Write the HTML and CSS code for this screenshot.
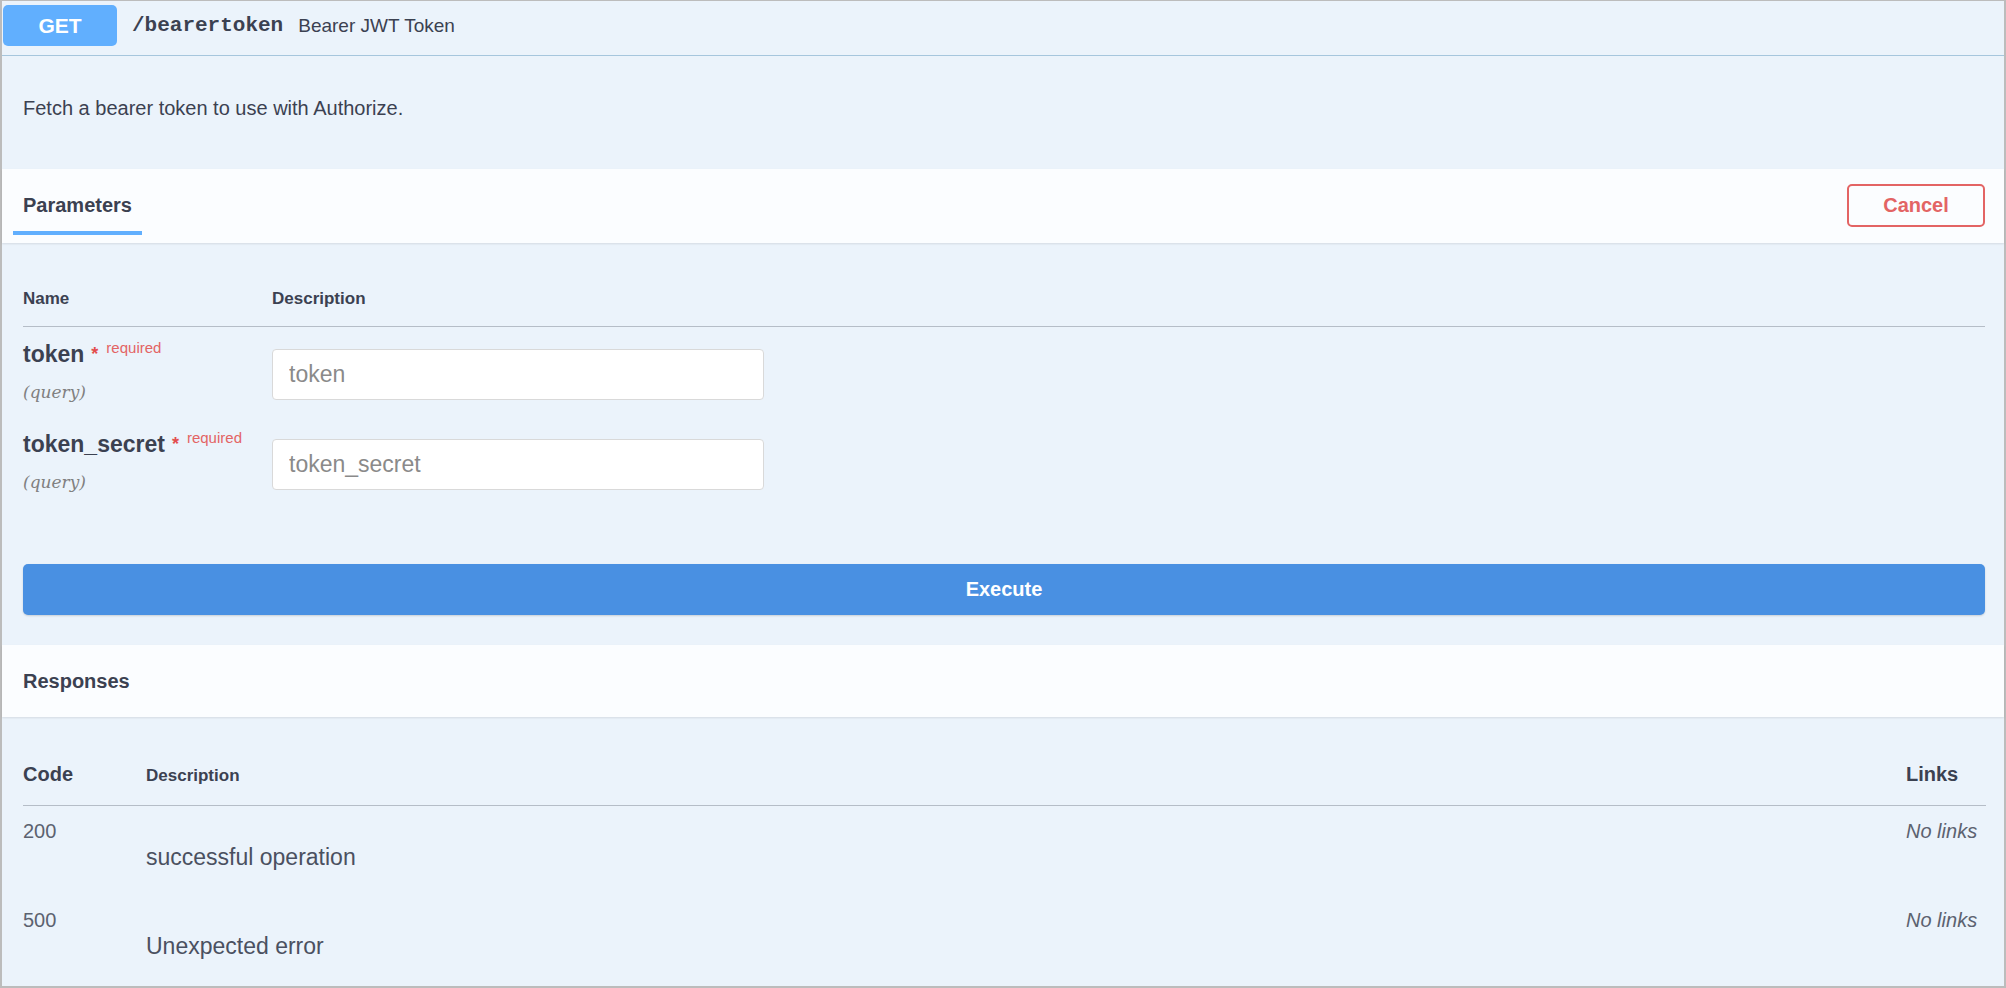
FILE: index.html
```html
<!DOCTYPE html>
<html lang="en">
<head>
  <meta charset="UTF-8">
  <meta name="viewport" content="width=device-width, initial-scale=1.0">
  <title>GET /bearertoken</title>
  <link rel="stylesheet" href="styles.css">
</head>
<body>
  <div class="opblock">
    <!-- Summary -->
    <div class="summary">
      <span class="method">GET</span>
      <span class="path">/bearertoken</span>
      <span class="summary-text">Bearer JWT Token</span>
    </div>

    <div class="description">Fetch a bearer token to use with Authorize.</div>

    <!-- Parameters -->
    <div class="section-header">
      <div class="tab">Parameters</div>
      <button class="btn-cancel">Cancel</button>
    </div>

    <div class="params">
      <div class="params-head">
        <div class="col-name">Name</div>
        <div class="col-desc">Description</div>
      </div>

      <div class="param-row">
        <div class="col-name">
          <div class="param-name">token<span class="star">*</span><span class="req">required</span></div>
          <div class="param-in">(query)</div>
        </div>
        <div class="col-desc">
          <input class="param-input" type="text" placeholder="token">
        </div>
      </div>

      <div class="param-row">
        <div class="col-name">
          <div class="param-name">token_secret<span class="star">*</span><span class="req">required</span></div>
          <div class="param-in">(query)</div>
        </div>
        <div class="col-desc">
          <input class="param-input" type="text" placeholder="token_secret">
        </div>
      </div>
    </div>

    <div class="execute-wrap">
      <button class="btn-execute">Execute</button>
    </div>

    <!-- Responses -->
    <div class="section-header responses-header">
      <div class="section-title">Responses</div>
    </div>

    <div class="responses">
      <div class="resp-head">
        <div class="col-code">Code</div>
        <div class="col-rdesc">Description</div>
        <div class="col-links">Links</div>
      </div>

      <div class="resp-row">
        <div class="col-code status">200</div>
        <div class="col-rdesc resp-text">successful operation</div>
        <div class="col-links no-links">No links</div>
      </div>

      <div class="resp-row">
        <div class="col-code status">500</div>
        <div class="col-rdesc resp-text">Unexpected error</div>
        <div class="col-links no-links">No links</div>
      </div>
    </div>
  </div>
</body>
</html>
```

FILE: styles.css
```css
/* Stylesheet */
body {
  margin: 0;
  font-family: "Liberation Sans", Arial, sans-serif;
  color: #3b4151;
}

.opblock {
  box-sizing: border-box;
  height: 988px;
  background-color: #ebf3fb;
  border: 2px solid #bcbcbc;
  border-top-width: 1px;
}

/* Summary row */
.summary {
  box-sizing: border-box;
  height: 55px;
  display: flex;
  align-items: center;
  padding: 4px 0 9px 1px;
  border-bottom: 1px solid #a6c6dd;
}

.method {
  width: 114px;
  height: 41px;
  display: flex;
  align-items: center;
  justify-content: center;
  background-color: #61affe;
  border-radius: 5px;
  color: #fff;
  font-weight: bold;
  font-size: 21px;
}

.path {
  margin-left: 15px;
  font-family: "Liberation Mono", monospace;
  font-weight: bold;
  font-size: 21px;
}

.summary-text {
  margin-left: 15px;
  font-size: 19px;
}

.description {
  padding: 40px 21px 49px;
  font-size: 20px;
  line-height: 24px;
}

/* Section headers */
.section-header {
  box-sizing: border-box;
  height: 74px;
  display: flex;
  justify-content: space-between;
  align-items: flex-start;
  background-color: #fbfdff;
  box-shadow: 0 1px 2px rgba(0, 0, 0, 0.1);
}

.tab {
  margin: 24px 0 0 11px;
  padding: 0 10px 14px;
  border-bottom: 4px solid #61affe;
  font-size: 20px;
  line-height: 24px;
  font-weight: bold;
}

.btn-cancel {
  margin: 15px 19px 0 0;
  width: 138px;
  height: 43px;
  background: transparent;
  border: 2px solid #e36464;
  border-radius: 5px;
  color: #e36464;
  font-family: inherit;
  font-weight: bold;
  font-size: 20px;
  cursor: pointer;
}

/* Parameters table */
.params {
  padding: 0 19px 0 21px;
}

.params-head {
  display: flex;
  padding: 46px 0 17px;
  border-bottom: 1px solid #b5bdc7;
  font-size: 17px;
  line-height: 20px;
  font-weight: bold;
}

.col-name {
  width: 249px;
  flex-shrink: 0;
}

.col-desc {
  flex: 1;
}

.param-row {
  display: flex;
  padding: 14px 0 15px;
}

.param-name {
  font-size: 23px;
  line-height: 26px;
  font-weight: bold;
}

.star {
  margin-left: 7px;
  color: #e34d4d;
  font-size: 18px;
  vertical-align: top;
}

.req {
  margin-left: 8px;
  color: #e36464;
  font-size: 15px;
  font-weight: normal;
  vertical-align: top;
  position: relative;
  top: -6px;
}

.param-in {
  margin-top: 15px;
  font-family: "DejaVu Serif", serif;
  font-style: italic;
  font-size: 17px;
  line-height: 20px;
  color: #808080;
}

.param-input {
  box-sizing: border-box;
  width: 492px;
  height: 51px;
  margin-top: 8px;
  padding: 0 16px;
  background-color: #fff;
  border: 1px solid #d9d9d9;
  border-radius: 4px;
  font-family: inherit;
  font-size: 23px;
  color: #3b4151;
}

.param-input::placeholder {
  color: #8a8a8a;
}

/* Execute */
.execute-wrap {
  padding: 57px 19px 30px 21px;
}

.btn-execute {
  display: block;
  width: 100%;
  height: 51px;
  background-color: #4990e2;
  border: none;
  border-radius: 5px;
  box-shadow: 0 1px 2px rgba(0, 0, 0, 0.15);
  color: #fff;
  font-family: inherit;
  font-weight: bold;
  font-size: 20px;
  cursor: pointer;
}

/* Responses */
.responses-header {
  height: 72px;
  align-items: center;
}

.section-title {
  margin-left: 21px;
  font-size: 20px;
  font-weight: bold;
}

.responses {
  padding: 0 18px 0 21px;
}

.resp-head {
  display: flex;
  align-items: baseline;
  padding: 45px 0 17px;
  border-bottom: 1px solid #b5bdc7;
  font-weight: bold;
  font-size: 20px;
  line-height: 24px;
}

.resp-head .col-rdesc {
  font-size: 17px;
}

.col-code {
  width: 123px;
  flex-shrink: 0;
}

.col-rdesc {
  flex: 1;
}

.col-links {
  width: 80px;
  flex-shrink: 0;
}

.resp-row {
  display: flex;
  align-items: flex-start;
  padding: 13px 0 24px;
}

.status {
  font-size: 20px;
  line-height: 24px;
  color: #5c6270;
}

.resp-text {
  margin-top: 24px;
  font-size: 23px;
  line-height: 28px;
  color: #4a5060;
}

.no-links {
  font-style: italic;
  font-size: 20px;
  line-height: 24px;
  color: #5c6270;
}
```
